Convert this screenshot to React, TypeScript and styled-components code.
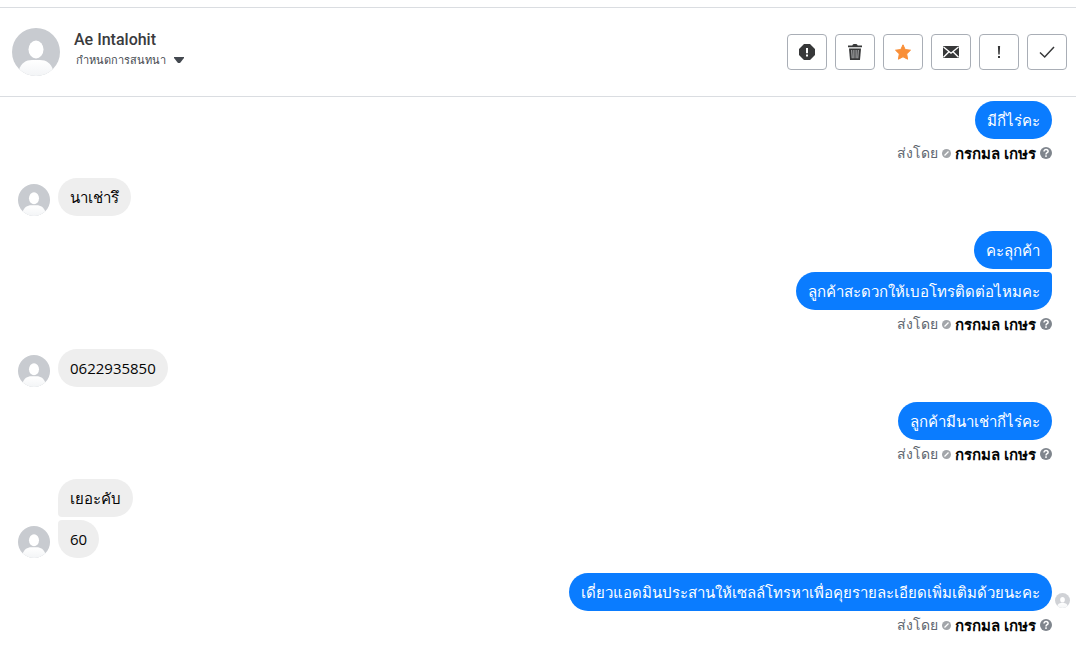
import React from "react";
import styled, { createGlobalStyle } from "styled-components";

const GlobalStyle = createGlobalStyle`
  * { box-sizing: border-box; }
  body {
    margin: 0;
    background: #fff;
    color: #050505;
    font-family: "Open Sans", "Noto Sans", sans-serif;
  }
`;

const Page = styled.main`
  padding-top: 7px;
`;

const Header = styled.header`
  display: flex;
  align-items: center;
  justify-content: space-between;
  height: 90px;
  padding: 0 9px 0 12px;
  border-top: 1px solid #dadde1;
  border-bottom: 1px solid #dadde1;
`;

const Contact = styled.div`
  display: flex;
  align-items: center;
  gap: 14px;
`;

const ContactText = styled.div`
  display: flex;
  flex-direction: column;
  align-items: flex-start;
  padding-bottom: 4px;
`;

const ContactName = styled.h1`
  margin: 0;
  font: 500 16px/20px Roboto, sans-serif;
  color: #3a3b3e;
`;

const AssignButton = styled.button`
  display: flex;
  align-items: center;
  gap: 8px;
  height: 20px;
  padding: 0 2px;
  border: 0;
  background: none;
  color: #444950;
  font: 500 11px/20px "Noto Sans", sans-serif;
`;

const Toolbar = styled.div`
  display: flex;
  gap: 8px;
`;

const ToolButton = styled.button<{ $accent?: boolean }>`
  display: flex;
  align-items: center;
  justify-content: center;
  width: 40px;
  height: 36px;
  padding: 0;
  border: 1px solid #a9aeb6;
  border-radius: 4px;
  background: #fff;
  color: ${(p) => (p.$accent ? "#f98f38" : "#373839")};
`;

const Thread = styled.section`
  display: flex;
  flex-direction: column;
  gap: 15px;
  padding: 4px 24px 16px 18px;
`;

const IncomingTurn = styled.div`
  display: flex;
  align-items: flex-end;
  gap: 8px;
`;

const OutgoingTurn = styled.div`
  display: flex;
  flex-direction: column;
`;

const Stack = styled.div<{ $out?: boolean }>`
  display: flex;
  flex-direction: column;
  align-items: ${(p) => (p.$out ? "flex-end" : "flex-start")};
  gap: 3px;
`;

const BubbleRow = styled.div`
  position: relative;
`;

const corner = (out: boolean, first: boolean, last: boolean) => {
  const top = first ? 19 : 4;
  const bottom = last ? 19 : 4;
  return out ? `19px ${top}px ${bottom}px 19px` : `${top}px 19px 19px ${bottom}px`;
};

const Bubble = styled.p<{ $out: boolean; $first: boolean; $last: boolean }>`
  margin: 0;
  padding: 0 12px;
  border-radius: ${(p) => corner(p.$out, p.$first, p.$last)};
  background: ${(p) => (p.$out ? "#0a7cff" : "#eeeeee")};
  color: ${(p) => (p.$out ? "#fff" : "#050505")};
  font-size: 15px;
  line-height: 38px;
  white-space: nowrap;
`;

const SeenMark = styled.span`
  position: absolute;
  left: calc(100% + 3px);
  bottom: 3px;
  display: flex;
  opacity: 0.85;
`;

const Meta = styled.div`
  display: flex;
  align-items: center;
  justify-content: flex-end;
  gap: 4px;
  height: 24px;
  padding-top: 4px;
  color: #606770;
  font-size: 14px;
  line-height: 18px;
`;

const Sender = styled.strong`
  color: #050505;
  font-size: 15px;
  font-weight: 600;
`;

const Drawing = styled.svg`
  display: block;
  flex: none;
`;

function Avatar({ size }: { size: number }) {
  const id = React.useId();
  return (
    <Drawing width={size} height={size} viewBox="0 0 48 48" aria-hidden="true">
      <defs>
        <clipPath id={`${id}c`}>
          <circle cx="24" cy="24" r="24" />
        </clipPath>
        <linearGradient id={`${id}g`} x1="0" y1="0" x2="0" y2="1">
          <stop offset="0" stopColor="#fff" />
          <stop offset="1" stopColor="#f1f3f5" />
        </linearGradient>
      </defs>
      <g clipPath={`url(#${id}c)`}>
        <rect width="48" height="48" fill="#c8cbd0" />
        <ellipse cx="24" cy="21.5" rx="7.5" ry="9" fill="#fff" />
        <path d="M7 42C9 35 14 32 20 32h8c6 0 11 3 13 10v8H7z" fill={`url(#${id}g)`} />
      </g>
    </Drawing>
  );
}

const icons = {
  spam: (
    <path
      fillRule="evenodd"
      d="M5 0h6l5 5v6l-5 5H5l-5-5V5zM7 4v5.200h2V4zM7 10.500v2h2v-2z"
      fill="currentColor"
    />
  ),
  trash: (
    <>
      <path d="M1 1.500h4.300C5.800.4 6.300 0 8 0s2.200.4 2.700 1.500H15V3.200H1z" fill="currentColor" />
      <path d="M2 4.500h12L13 16H3z" fill="currentColor" />
      <path d="M4.700 6l.5 8.300M6.900 6v8.300M9.100 6v8.300M11.300 6l-.5 8.300" stroke="#b4b5b7" strokeWidth="1" fill="none" />
    </>
  ),
  star: (
    <path
      d="M8 .8l2.200 4.700 5.300.7-3.800 3.700.9 5.300L8 12.800l-4.600 2.400.9-5.300L.5 6.200l5.300-.7z"
      fill="currentColor"
      stroke="currentColor"
      strokeLinejoin="round"
    />
  ),
  mail: (
    <>
      <rect y="2" width="16" height="12" rx="1" fill="currentColor" />
      <path d="M.5 3L8 9.200 15.500 3M.5 13.300L6 7.800M15.500 13.300L10 7.800" fill="none" stroke="#fff" strokeWidth="1.400" />
    </>
  ),
  alert: <path d="M6.900 2h2.200l-.4 8.500H7.300zM7 12h2v2H7z" fill="currentColor" />,
  check: <path d="M1 8.500l4.700 4.500L15 3" fill="none" stroke="currentColor" strokeWidth="1.500" />,
};

type IconName = keyof typeof icons;

const tools: { name: IconName; label: string }[] = [
  { name: "spam", label: "สแปม" },
  { name: "trash", label: "ลบ" },
  { name: "star", label: "ติดดาว" },
  { name: "mail", label: "ยังไม่ได้อ่าน" },
  { name: "alert", label: "ติดตามผล" },
  { name: "check", label: "เสร็จสิ้น" },
];

function SentBy() {
  return (
    <Meta>
      <span>ส่งโดย</span>
      <Drawing width="9" height="9" viewBox="0 0 9 9" aria-hidden="true">
        <circle cx="4.500" cy="4.500" r="4.500" fill="#a3a6aa" />
        <path d="M2.500 6.500l4-4" stroke="#fff" strokeWidth="1.300" />
      </Drawing>
      <Sender>กรกมล เกษร</Sender>
      <Drawing width="12" height="12" viewBox="0 0 12 12" aria-hidden="true">
        <circle cx="6" cy="6" r="6" fill="#7f858d" />
        <path d="M4 4.500c0-2.800 4.100-2.500 4.100-.1C8.100 5.800 6 5.700 6 7.400" fill="none" stroke="#fff" strokeWidth="1.500" />
        <rect x="5.200" y="8.300" width="1.600" height="1.600" fill="#fff" />
      </Drawing>
    </Meta>
  );
}

interface TurnData {
  out: boolean;
  texts: string[];
  seen?: boolean;
}

const turns: TurnData[] = [
  { out: true, texts: ["มีกี่ไร่คะ"] },
  { out: false, texts: ["นาเช่ารึ"] },
  { out: true, texts: ["คะลุกค้า", "ลูกค้าสะดวกให้เบอโทรติดต่อไหมคะ"] },
  { out: false, texts: ["0622935850"] },
  { out: true, texts: ["ลูกค้ามีนาเช่ากี่ไร่คะ"] },
  { out: false, texts: ["เยอะคับ", "60"] },
  { out: true, texts: ["เดี่ยวแอดมินประสานให้เซลล์โทรหาเพื่อคุยรายละเอียดเพิ่มเติมด้วยนะคะ"], seen: true },
];

function Bubbles({ turn }: { turn: TurnData }) {
  const last = turn.texts.length - 1;
  return (
    <Stack $out={turn.out}>
      {turn.texts.map((text, i) => (
        <BubbleRow key={text}>
          <Bubble $out={turn.out} $first={i === 0} $last={i === last}>
            {text}
          </Bubble>
          {turn.seen && i === last && (
            <SeenMark>
              <Avatar size={15} />
            </SeenMark>
          )}
        </BubbleRow>
      ))}
    </Stack>
  );
}

export default function App() {
  return (
    <Page>
      <GlobalStyle />
      <Header>
        <Contact>
          <Avatar size={48} />
          <ContactText>
            <ContactName>Ae Intalohit</ContactName>
            <AssignButton type="button">
              กำหนดการสนทนา
              <Drawing width="10" height="6" viewBox="0 0 10 6" aria-hidden="true">
                <path d="M0 0h10v1L6 6H4L0 1z" fill="#444950" />
              </Drawing>
            </AssignButton>
          </ContactText>
        </Contact>
        <Toolbar>
          {tools.map((tool) => (
            <ToolButton key={tool.name} type="button" aria-label={tool.label} $accent={tool.name === "star"}>
              <Drawing width="16" height="16" viewBox="0 0 16 16" aria-hidden="true">
                {icons[tool.name]}
              </Drawing>
            </ToolButton>
          ))}
        </Toolbar>
      </Header>
      <Thread>
        {turns.map((turn) =>
          turn.out ? (
            <OutgoingTurn key={turn.texts[0]}>
              <Bubbles turn={turn} />
              <SentBy />
            </OutgoingTurn>
          ) : (
            <IncomingTurn key={turn.texts[0]}>
              <Avatar size={32} />
              <Bubbles turn={turn} />
            </IncomingTurn>
          )
        )}
      </Thread>
    </Page>
  );
}
